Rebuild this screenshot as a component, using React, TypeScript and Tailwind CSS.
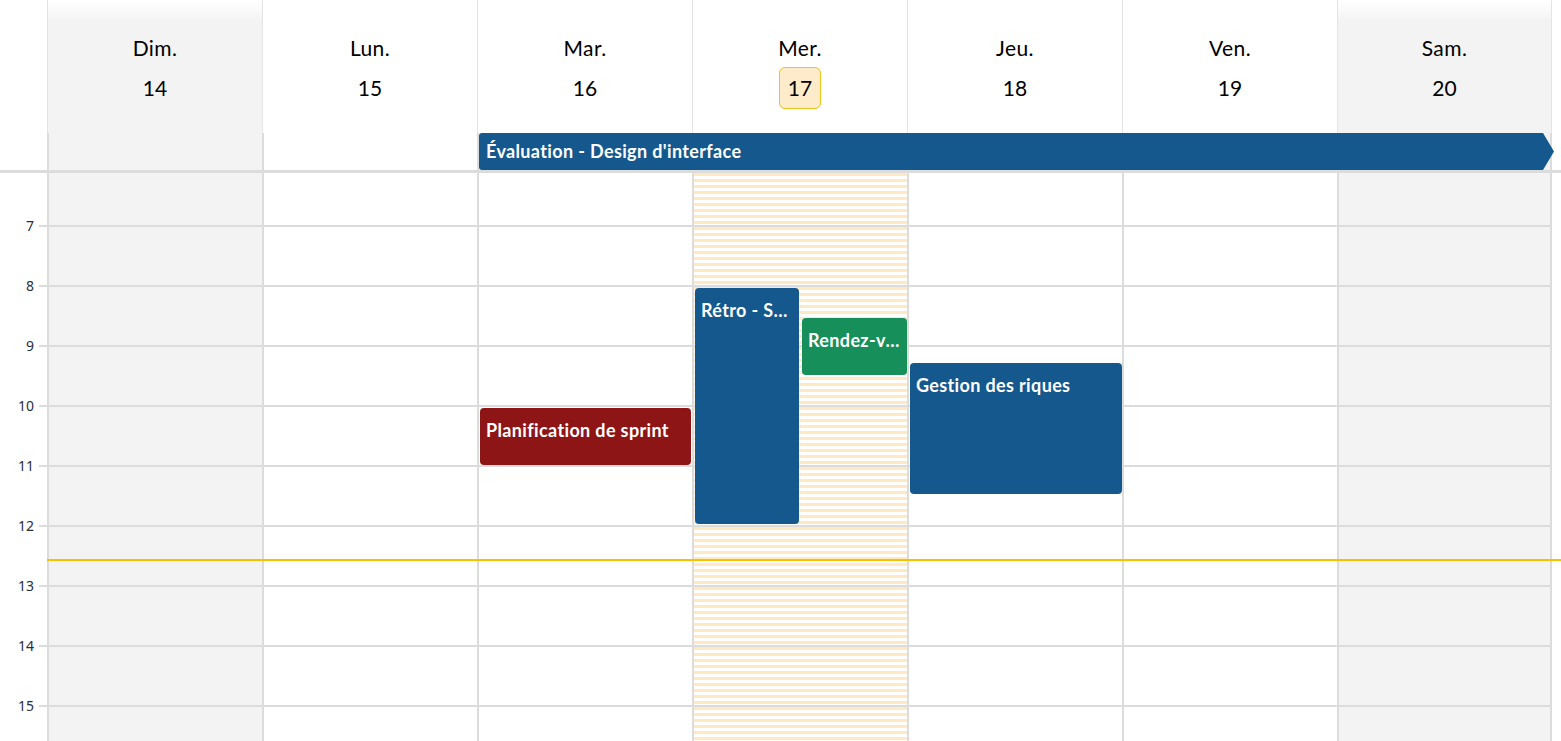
import {FC} from 'react';

interface Day {
  name: string;
  num: number;
  weekend?: boolean;
  today?: boolean;
}

interface CalEvent {
  title: string;
  top: number;
  height: number;
  left: number;
  width: number;
  color: string;
}

const DAYS: Day[] = [
  {name: 'Dim.', num: 14, weekend: true},
  {name: 'Lun.', num: 15},
  {name: 'Mar.', num: 16},
  {name: 'Mer.', num: 17, today: true},
  {name: 'Jeu.', num: 18},
  {name: 'Ven.', num: 19},
  {name: 'Sam.', num: 20, weekend: true},
];

const HOURS = [7, 8, 9, 10, 11, 12, 13, 14, 15];

// events per column index, offsets in px from the top of the body
const EVENTS: Record<number, CalEvent[]> = {
  2: [{title: 'Planification de sprint', top: 235, height: 57, left: 1, width: 211, color: 'bg-[#8e1515]'}],
  3: [
    {title: 'Rétro - Sprint 4', top: 115, height: 236, left: 1, width: 104, color: 'bg-[#14588e]'},
    {title: 'Rendez-vous client', top: 145, height: 57, left: 108, width: 105, color: 'bg-[#168f5b]'},
  ],
  4: [{title: 'Gestion des riques', top: 190, height: 131, left: 1, width: 212, color: 'bg-[#14588e]'}],
};

const headerBg = (d: Day) =>
  d.weekend ? 'bg-[linear-gradient(to_bottom,#ffffff_0px,#f3f3f3_22px)]' : 'bg-white';

const bodyBg = (d: Day) => {
  if (d.today) return 'bg-[repeating-linear-gradient(to_bottom,#fde9c4_0px,#fde9c4_3px,#ffffff_3px,#ffffff_6px)]';
  if (d.weekend) return 'bg-[#f3f3f3]';
  return 'bg-white';
};

const EventBlock: FC<{ev: CalEvent}> = ({ev}) => (
  <div
    className={`absolute overflow-hidden rounded-[4px] px-[6px] pt-[11px] ${ev.color}`}
    style={{top: ev.top, height: ev.height, left: ev.left, width: ev.width}}
  >
    <div className="truncate text-[18px] font-bold leading-[22px] tracking-[0.02em] text-white">{ev.title}</div>
  </div>
);

const DayColumn: FC<{day: Day; index: number; last: boolean}> = ({day, index, last}) => (
  <div className={`relative h-full w-[215px] shrink-0 border-l-2 border-[#dcdcdc] ${last ? 'border-r-2' : ''} ${bodyBg(day)}`}>
    <div className="h-[52px]" />
    {HOURS.map(h => (
      <div className="h-[60px] border-t-2 border-[#dcdcdc]" key={h} />
    ))}
    {(EVENTS[index] || []).map(ev => (
      <EventBlock ev={ev} key={ev.title} />
    ))}
  </div>
);

export default function App() {
  return (
    <div className="relative h-[741px] w-[1561px] overflow-hidden bg-white font-['Lato',sans-serif] text-black">
      {/* day header */}
      <div className="flex h-[133px]">
        <div className="w-[47px] shrink-0" />
        {DAYS.map((d, i) => (
          <div
            className={`flex w-[215px] shrink-0 flex-col items-center border-l border-[#e4e4e4] pt-[36px] ${i === 6 ? 'border-r' : ''} ${headerBg(d)}`}
            key={d.num}
          >
            <div className="h-[24px] text-[21px] leading-[24px] tracking-[0.02em]">{d.name}</div>
            <div
              className={`mt-[7px] flex h-[42px] w-[42px] items-center justify-center text-[21px] ${
                d.today ? 'rounded-[6px] border border-[#f5c21b] bg-[#fdebc9]' : ''
              }`}
            >
              {d.num}
            </div>
          </div>
        ))}
      </div>

      {/* all-day row */}
      <div className="relative flex h-[37px]">
        <div className="w-[47px] shrink-0" />
        {DAYS.map((d, i) => (
          <div
            className={`w-[215px] shrink-0 border-l-2 border-[#dcdcdc] ${i === 6 ? 'border-r-2' : ''} ${d.weekend ? 'bg-[#f3f3f3]' : 'bg-white'}`}
            key={d.num}
          />
        ))}
        <div className="absolute left-[479px] top-0 flex h-[37px] w-[1075px] items-center rounded-l-[3px] bg-[#14588e] pl-[7px] [clip-path:polygon(0_0,calc(100%-11px)_0,100%_50%,calc(100%-11px)_100%,0_100%)]">
          <span className="text-[18px] font-bold tracking-[0.02em] text-white">Évaluation - Design d'interface</span>
        </div>
      </div>
      <div className="h-[3px] bg-[#dcdcdc]" />

      {/* time grid */}
      <div className="relative flex h-[568px]">
        <div className="w-[47px] shrink-0">
          <div className="h-[52px]" />
          {HOURS.map(h => (
            <div className="h-[60px]" key={h}>
              <div className="flex h-[2px] items-center">
                <span className="w-[34px] text-right font-['Noto_Sans',sans-serif] text-[14px] leading-none text-[#1f2f44]">
                  {h}
                </span>
                <span className="ml-[5px] h-[2px] w-[8px] bg-[#dcdcdc]" />
              </div>
            </div>
          ))}
        </div>
        {DAYS.map((d, i) => (
          <DayColumn day={d} index={i} key={d.num} last={i === 6} />
        ))}
        <div className="absolute left-[47px] right-0 top-[386px] h-[2px] bg-[#f7c100]" />
      </div>
    </div>
  );
}
